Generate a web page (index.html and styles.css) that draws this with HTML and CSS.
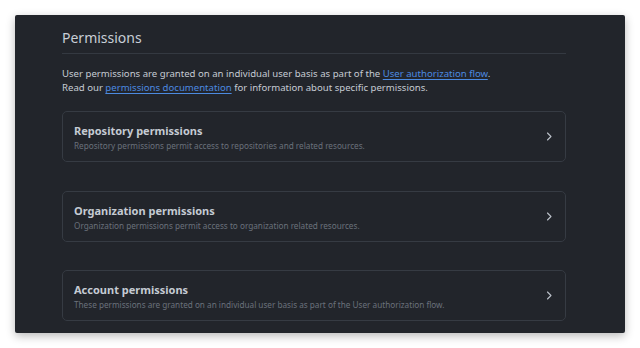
FILE: index.html
```html
<!DOCTYPE html>
<html lang="en">
<head>
<meta charset="utf-8">
<title>Permissions</title>
<link rel="stylesheet" href="styles.css">
</head>
<body>
<div class="window">
  <div class="content">
    <h2 class="title">Permissions</h2>
    <p class="intro">User permissions are granted on an individual user basis as part of the <a href="#">User authorization flow</a>.<br>Read our <a href="#">permissions documentation</a> for information about specific permissions.</p>
    <div class="list">
      <div class="perm">
        <div class="perm-text">
          <div class="perm-name">Repository permissions</div>
          <div class="perm-desc">Repository permissions permit access to repositories and related resources.</div>
        </div>
        <svg class="chev" viewBox="0 0 16 16" width="13" height="13"><path d="M6.22 3.22a.75.75 0 0 1 1.06 0l4.25 4.25a.75.75 0 0 1 0 1.06l-4.25 4.25a.75.75 0 0 1-1.06-1.06L9.94 8 6.22 4.28a.75.75 0 0 1 0-1.06Z"/></svg>
      </div>
      <div class="perm">
        <div class="perm-text">
          <div class="perm-name">Organization permissions</div>
          <div class="perm-desc">Organization permissions permit access to organization related resources.</div>
        </div>
        <svg class="chev" viewBox="0 0 16 16" width="13" height="13"><path d="M6.22 3.22a.75.75 0 0 1 1.06 0l4.25 4.25a.75.75 0 0 1 0 1.06l-4.25 4.25a.75.75 0 0 1-1.06-1.06L9.94 8 6.22 4.28a.75.75 0 0 1 0-1.06Z"/></svg>
      </div>
      <div class="perm">
        <div class="perm-text">
          <div class="perm-name">Account permissions</div>
          <div class="perm-desc">These permissions are granted on an individual user basis as part of the User authorization flow.</div>
        </div>
        <svg class="chev" viewBox="0 0 16 16" width="13" height="13"><path d="M6.22 3.22a.75.75 0 0 1 1.06 0l4.25 4.25a.75.75 0 0 1 0 1.06l-4.25 4.25a.75.75 0 0 1-1.06-1.06L9.94 8 6.22 4.28a.75.75 0 0 1 0-1.06Z"/></svg>
      </div>
    </div>
  </div>
</div>
</body>
</html>
```

FILE: styles.css
```css
html, body {
  margin: 0;
  padding: 0;
  background: #ffffff;
}
body {
  font-family: "Noto Sans", "DejaVu Sans", sans-serif;
  padding: 15px;
}
.window {
  width: 610px;
  height: 318px;
  background: #22252b;
  border-radius: 2px;
  box-shadow: 0 3px 10px rgba(0, 0, 0, 0.28);
  overflow: hidden;
  box-sizing: border-box;
  padding: 0 59px 0 47px;
}
.content {
  padding-top: 10px;
}
.title {
  margin: 0;
  font-size: 14px;
  font-weight: 400;
  line-height: 26px;
  color: #c8ced6;
  border-bottom: 1px solid #343941;
  padding-bottom: 2px;
}
.intro {
  margin: 13px 0 0;
  font-size: 9.6px;
  line-height: 14px;
  color: #c5cbd3;
}
.intro a {
  color: #4c8ae0;
  text-decoration: underline;
  text-underline-offset: 2px;
}
.list {
  margin-top: 16px;
  display: flex;
  flex-direction: column;
  gap: 28.5px;
}
.perm {
  height: 51px;
  box-sizing: border-box;
  border: 1px solid #363b43;
  border-radius: 5px;
  display: flex;
  align-items: flex-start;
  padding: 11px 10px 0 11px;
}
.perm-text {
  flex: 1;
}
.perm-name {
  font-size: 11px;
  font-weight: 700;
  color: #c5cbd3;
  line-height: 15px;
}
.perm-desc {
  font-size: 8.2px;
  color: #6a717b;
  line-height: 15px;
}
.chev {
  fill: #b8bec6;
  align-self: center;
  margin-top: -11px;
}
```
